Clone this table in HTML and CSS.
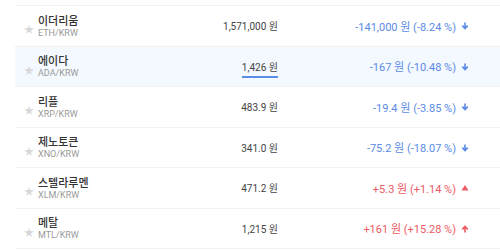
FILE: index.html
```html
<!DOCTYPE html>
<html lang="ko">
<head>
  <meta charset="UTF-8" />
  <title>코인 시세</title>
  <link rel="stylesheet" href="styles.css">
</head>
<body>

  <div class="coin-list">
    <div class="coin-row">
      <span class="star">&#9733;</span>
      <div class="coin-name"><strong>이더리움</strong><small>ETH/KRW</small></div>
      <div class="price">1,571,000 원</div>
      <div class="change down">-141,000 원 (-8.24 %)</div>
      <div class="arrow down"><svg width="8" height="8" viewBox="0 0 8 8"><path d="M4 0.5v5M1.3 3.6L4 6.6l2.7-3" fill="none" stroke="currentColor" stroke-width="1.6"/></svg></div>
    </div>
    <div class="coin-row active">
      <span class="star">&#9733;</span>
      <div class="coin-name"><strong>에이다</strong><small>ADA/KRW</small></div>
      <div class="price"><span class="current">1,426 원</span></div>
      <div class="change down">-167 원 (-10.48 %)</div>
      <div class="arrow down"><svg width="8" height="8" viewBox="0 0 8 8"><path d="M4 0.5v5M1.3 3.6L4 6.6l2.7-3" fill="none" stroke="currentColor" stroke-width="1.6"/></svg></div>
    </div>
    <div class="coin-row">
      <span class="star">&#9733;</span>
      <div class="coin-name"><strong>리플</strong><small>XRP/KRW</small></div>
      <div class="price">483.9 원</div>
      <div class="change down">-19.4 원 (-3.85 %)</div>
      <div class="arrow down"><svg width="8" height="8" viewBox="0 0 8 8"><path d="M4 0.5v5M1.3 3.6L4 6.6l2.7-3" fill="none" stroke="currentColor" stroke-width="1.6"/></svg></div>
    </div>
    <div class="coin-row">
      <span class="star">&#9733;</span>
      <div class="coin-name"><strong>제노토큰</strong><small>XNO/KRW</small></div>
      <div class="price">341.0 원</div>
      <div class="change down">-75.2 원 (-18.07 %)</div>
      <div class="arrow down"><svg width="8" height="8" viewBox="0 0 8 8"><path d="M4 0.5v5M1.3 3.6L4 6.6l2.7-3" fill="none" stroke="currentColor" stroke-width="1.6"/></svg></div>
    </div>
    <div class="coin-row">
      <span class="star">&#9733;</span>
      <div class="coin-name"><strong>스텔라루멘</strong><small>XLM/KRW</small></div>
      <div class="price">471.2 원</div>
      <div class="change up">+5.3 원 (+1.14 %)</div>
      <div class="arrow up"><svg width="8" height="8" viewBox="0 0 8 8"><path d="M4 1L7.5 6.5h-7z" fill="currentColor"/></svg></div>
    </div>
    <div class="coin-row">
      <span class="star">&#9733;</span>
      <div class="coin-name"><strong>메탈</strong><small>MTL/KRW</small></div>
      <div class="price">1,215 원</div>
      <div class="change up">+161 원 (+15.28 %)</div>
      <div class="arrow up"><svg width="8" height="8" viewBox="0 0 8 8"><path d="M4 7.5v-5M1.3 4.4L4 1.4l2.7 3" fill="none" stroke="currentColor" stroke-width="1.6"/></svg></div>
    </div>
  </div>

</body>
</html>
```

FILE: styles.css
```css
body {
  font-family: Roboto, "Noto Sans CJK KR", sans-serif;
  background: #fff;
  margin: 0;
  padding: 5px 0 0 15px;
}

.coin-list {
  border-top: 1px solid #f1f1f1;
}

.coin-row {
  display: grid;
  grid-template-columns: 15px 120px 119px 178px 13px;
  align-items: center;
  height: 39.5px;
  padding-left: 9px;
  border-bottom: 1px solid #f1f1f1;
}

.coin-row.active {
  background: #f4f9ff;
}

.star {
  color: #d8d8d8;
  font-size: 10px;
  padding-top: 6px;
}

.coin-name {
  display: flex;
  flex-direction: column;
  gap: 1px;
  margin-left: -1px;
}

.coin-name strong {
  font-family: "Noto Sans CJK KR", sans-serif;
  font-size: 11px;
  font-weight: 500;
  color: #333;
  line-height: 14px;
}

.coin-name small {
  font-size: 9px;
  color: #9a9a9a;
  line-height: 11px;
}

.price {
  text-align: right;
  font-size: 10px;
  color: #444;
}

.price .current {
  padding-bottom: 3px;
  border-bottom: 2px solid #5a8ee6;
}

.change {
  text-align: right;
  font-size: 11px;
}

.change.down, .arrow.down {
  color: #5b8be6;
}

.change.up, .arrow.up {
  color: #ee5a63;
}

.arrow {
  display: flex;
  justify-content: flex-end;
  padding-top: 1px;
}
```
